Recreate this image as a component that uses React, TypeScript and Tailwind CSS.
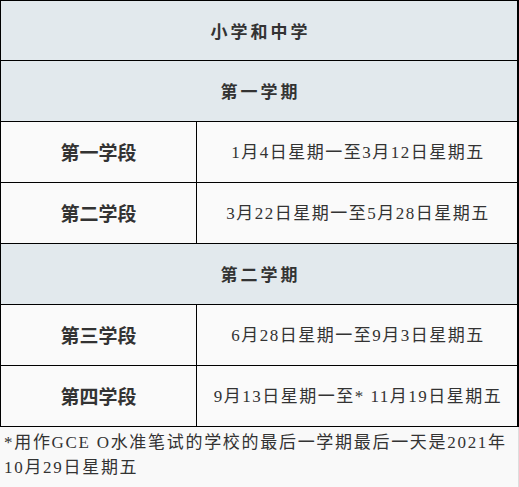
import React from "react";

function HeaderRow({ text, first = false }: { text: string; first?: boolean }) {
  return (
    <div
      className={
        first
          ? "flex h-[60px] items-center justify-center border-b border-black bg-[#e2e9ed] pl-[3px] font-['Noto_Sans_CJK_SC',sans-serif] text-[17px] font-bold tracking-[3px] text-[#333]"
          : "flex h-[61px] items-center justify-center border-b border-black bg-[#e2e9ed] pl-[3px] font-['Noto_Sans_CJK_SC',sans-serif] text-[17px] font-bold tracking-[3px] text-[#333]"
      }
    >
      {text}
    </div>
  );
}

function TermRow({ label, dates }: { label: string; dates: string }) {
  return (
    <div className="flex h-[61px] border-b border-black bg-[#fafafa] text-[#333]">
      <div className="flex w-[196px] items-center justify-center border-r border-black font-['Noto_Sans_CJK_SC',sans-serif] text-[19px] font-bold">
        {label}
      </div>
      <div className="flex flex-1 items-center justify-center whitespace-nowrap pt-[1px] pl-[2px] font-['Liberation_Serif','Noto_Sans_CJK_SC',serif] text-[17px] tracking-[1.5px]">
        {dates}
      </div>
    </div>
  );
}

export default function App() {
  return (
    <div className="h-[487px] w-[519px] overflow-hidden bg-white">
      <div className="w-[519px] border-t border-r-2 border-l border-black">
        <HeaderRow text="小学和中学" first />
        <HeaderRow text="第一学期" />
        <TermRow label="第一学段" dates="1月4日星期一至3月12日星期五" />
        <TermRow label="第二学段" dates="3月22日星期一至5月28日星期五" />
        <HeaderRow text="第二学期" />
        <TermRow label="第三学段" dates="6月28日星期一至9月3日星期五" />
        <TermRow label="第四学段" dates="9月13日星期一至* 11月19日星期五" />
      </div>
      <div className="h-[61px] whitespace-nowrap border-r border-b border-[#ddd] bg-[#f9f9f9] pt-[3px] pl-[4px] font-['Liberation_Serif','Noto_Sans_CJK_SC',serif] text-[17px] leading-[25px] tracking-[1.7px] text-[#333]">
        *用作GCE O水准笔试的学校的最后一学期最后一天是2021年
        <br />
        10月29日星期五
      </div>
    </div>
  );
}
